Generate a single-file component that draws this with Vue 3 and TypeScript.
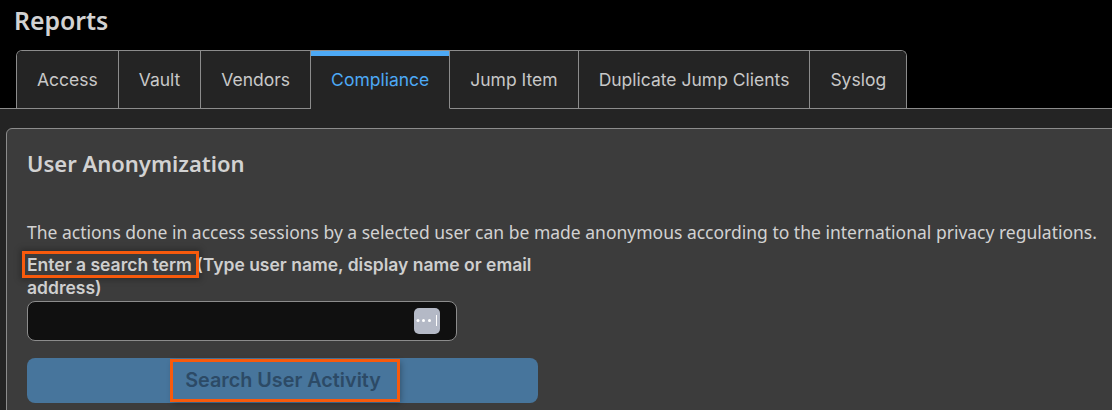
<script setup lang="ts">
const tabs: string[] = ['Access', 'Vault', 'Vendors', 'Compliance', 'Jump Item', 'Duplicate Jump Clients', 'Syslog']
const activeTab = 'Compliance'
</script>

<template>
  <div class="page">
    <header class="head">
      <h1 class="title">Reports</h1>
      <nav class="tabs">
        <div
          v-for="tab in tabs"
          :key="tab"
          class="tab"
          :class="{ active: tab === activeTab }"
        >{{ tab }}</div>
      </nav>
    </header>
    <main class="body">
      <section class="card">
        <h2 class="card-title">User Anonymization</h2>
        <p class="desc">The actions done in access sessions by a selected user can be made anonymous according to the international privacy regulations.</p>
        <label class="label"><span class="mark">Enter a search term </span>(Type user name, display name or email address)</label>
        <div class="input">
          <span class="dots">
            <svg width="26" height="26" viewBox="0 0 26 26">
              <rect width="26" height="26" rx="5" fill="#b4b9c6" />
              <circle cx="4" cy="12.5" r="1.5" fill="#fff" />
              <circle cx="9.5" cy="12.5" r="1.5" fill="#fff" />
              <circle cx="15.5" cy="12.5" r="1.5" fill="#fff" />
              <rect x="22" y="7" width="1" height="11" fill="#fff" />
            </svg>
          </span>
        </div>
        <button class="btn" type="button"><span class="btn-mark">Search User Activity</span></button>
      </section>
    </main>
  </div>
</template>

<style scoped>
.page {
  height: 410px;
  overflow: hidden;
  background: #000;
  font-family: Inter, "Liberation Sans", sans-serif;
}
.head {
  height: 108px;
  padding-left: 16px;
  display: flex;
  flex-direction: column;
}
.title {
  flex: none;
  margin: 5px 0 0 -2px;
  height: 45px;
  line-height: 30px;
  font-family: "Noto Sans", sans-serif;
  font-size: 24.8px;
  font-weight: 600;
  color: #d2d2d2;
}
.tabs {
  flex: none;
  position: relative;
  display: flex;
  align-self: flex-start;
  height: 59px;
  border: 1px solid #8c8c8c;
  border-bottom: 0;
  border-radius: 6px 6px 0 0;
  overflow: hidden;
  box-sizing: border-box;
}
.tab {
  padding: 0 20px;
  display: flex;
  align-items: center;
  background: #242424;
  color: #c8c8c8;
  font-size: 17.5px;
  border-right: 1px solid #8c8c8c;
  border-bottom: 1px solid #8c8c8c;
}
.tab:last-child {
  border-right: 0;
}
.tab.active {
  color: #4da9f5;
  border-bottom-color: #242424;
  box-shadow: inset 0 5px 0 #4da9f5;
}
.body {
  height: 302px;
  background: #242424;
  border-top: 1px solid #8c8c8c;
  padding: 19px 0 0 6px;
  box-sizing: border-box;
}
.card {
  height: 300px;
  margin-right: -20px;
  background: #3c3c3c;
  border: 1px solid #8c8c8c;
  border-radius: 6px 0 0 0;
  padding: 19px 20px 20px;
  box-sizing: border-box;
}
.card-title {
  margin: 0;
  font-family: "Noto Sans", sans-serif;
  font-size: 22px;
  line-height: 30px;
  font-weight: 600;
  color: #d2d2d2;
}
.desc {
  margin: 42px 0 0;
  font-family: "Noto Sans", sans-serif;
  font-size: 17.5px;
  line-height: 24px;
  white-space: nowrap;
  color: #d2d2d2;
}
.label {
  display: block;
  width: 520px;
  margin-top: 9px;
  font-size: 17.5px;
  line-height: 23px;
  font-weight: 600;
  color: #cfcfcf;
}
.mark {
  margin-left: -2px;
  padding: 0 0 0 2px;
  outline: 3px solid #f85a0c;
  box-shadow: 0 0 6px 5px rgba(0, 0, 0, 0.25);
}
.input {
  width: 430px;
  height: 40px;
  margin-top: 2px;
  background: #101010;
  border: 1px solid #8c8c8c;
  border-radius: 8px;
  box-sizing: border-box;
  display: flex;
  align-items: center;
  justify-content: flex-end;
  padding-right: 16px;
}
.dots {
  display: flex;
}
.btn {
  display: flex;
  align-items: center;
  justify-content: center;
  width: 511px;
  height: 45px;
  margin-top: 17px;
  padding: 0;
  border: 0;
  border-radius: 8px;
  background: #47759c;
  color: #2c4a66;
  font-family: Inter, sans-serif;
  font-size: 19.8px;
  font-weight: 600;
}
.btn-mark {
  margin-left: 5px;
  padding: 6px 16px 6px 12px;
  line-height: 25px;
  outline: 3px solid #f85a0c;
  box-shadow: 2px 2px 6px 2px rgba(0, 0, 0, 0.3);
}
</style>

<style>
html, body { margin: 0; background: #000; }
</style>
